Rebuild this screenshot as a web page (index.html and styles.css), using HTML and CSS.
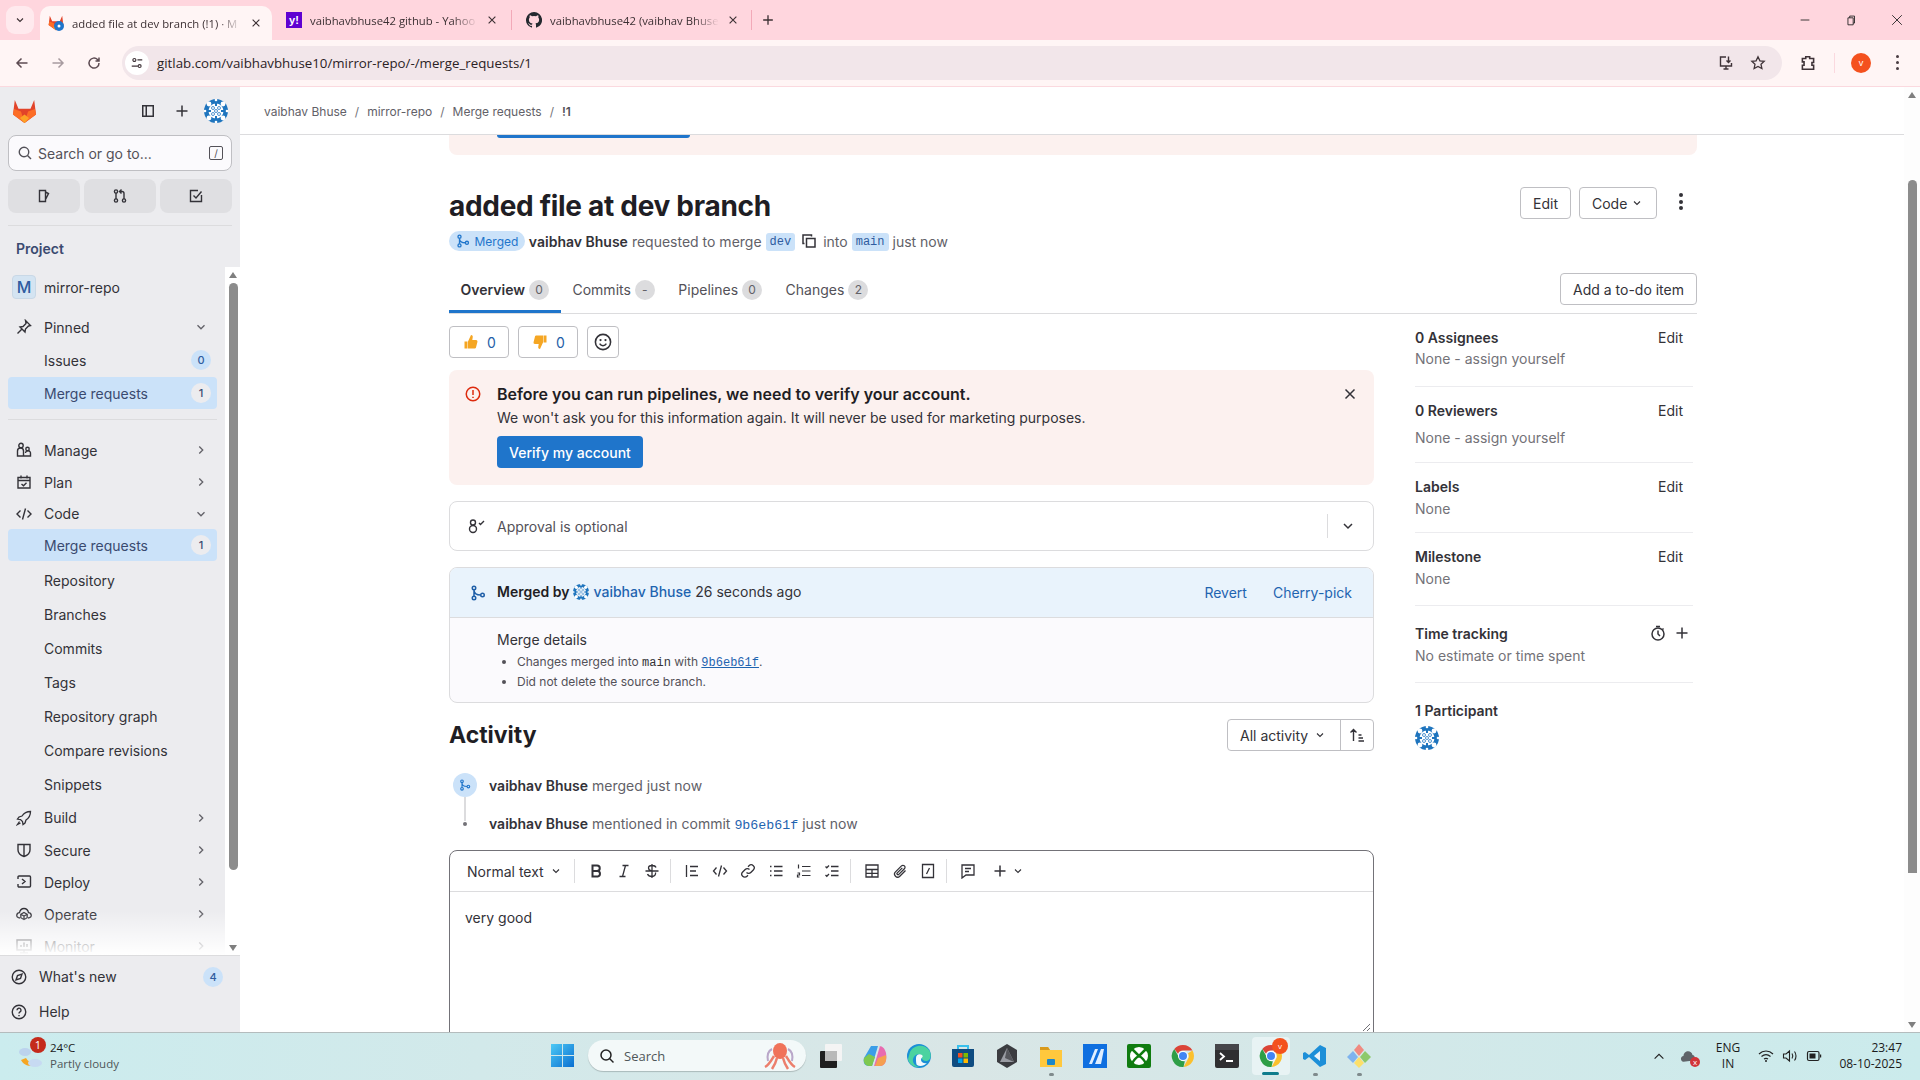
FILE: index.html
```html
<!DOCTYPE html>
<html lang="en">
<head>
    <meta charset="UTF-8">
    <title>added file at dev branch (!1) · Merge requests</title>
    <link rel="stylesheet" href="styles.css">
</head>
<body>
    <svg class="sprite" xmlns="http://www.w3.org/2000/svg">
        <symbol id="down" viewBox="0 0 16 16"><path d="M4 6l4 4 4-4" fill="none" stroke="currentColor" stroke-width="1.5"/></symbol>
        <symbol id="right" viewBox="0 0 16 16"><path d="M6 4l4 4-4 4" fill="none" stroke="currentColor" stroke-width="1.5"/></symbol>
        <symbol id="close" viewBox="0 0 16 16"><path d="M3.5 3.5l9 9M12.500 3.500l-9 9" fill="none" stroke="currentColor" stroke-width="1.5"/></symbol>
        <symbol id="plus" viewBox="0 0 16 16"><path d="M8 2.500v11M2.500 8h11" fill="none" stroke="currentColor" stroke-width="1.5"/></symbol>
        <symbol id="merge" viewBox="0 0 16 16"><g fill="none" stroke="currentColor" stroke-width="1.5"><circle cx="4" cy="3" r="1.750"/><circle cx="4" cy="13" r="1.750"/><circle cx="12.500" cy="10" r="1.750"/><path d="M4 4.750v6.500M4 5c0 3 2.500 5 6.750 5"/></g></symbol>
        <symbol id="avatar" viewBox="0 0 24 24">
            <circle cx="12" cy="12" r="12" fill="#1f75be"/>
            <g fill="#fff">
                <circle cx="12" cy="12" r="7.500"/>
                <circle cx="5" cy="5" r="2.400"/><circle cx="19" cy="5" r="2.400"/><circle cx="5" cy="19" r="2.400"/><circle cx="19" cy="19" r="2.400"/>
                <circle cx="12" cy="1" r="1.300"/><circle cx="12" cy="23" r="1.300"/><circle cx="1" cy="12" r="1.300"/><circle cx="23" cy="12" r="1.300"/>
            </g>
            <g fill="none" stroke="#3f8acb" stroke-width=".900">
                <circle cx="9" cy="9" r="1.500"/><circle cx="15" cy="9" r="1.500"/><circle cx="12" cy="12" r="1.500"/>
                <circle cx="9" cy="15" r="1.500"/><circle cx="15" cy="15" r="1.500"/>
            </g>
            <g fill="#1f75be">
                <rect x="11" y="4" width="2" height="3"/><rect x="11" y="17" width="2" height="3"/><rect x="4" y="11" width="3" height="2"/><rect x="17" y="11" width="3" height="2"/>
            </g>
        </symbol>
        <symbol id="fox" viewBox="0 0 25 25">
            <path d="M12.500 24L1 15.500 2.800 1l3.700 8.800h12L22.200 1 24 15.500z" fill="#e24329"/>
            <path d="M12.500 24L24 15.500l-1-5.500-7 2.500z" fill="#fc6d26"/>
            <path d="M12.500 24L1 15.500l1-5.500 7 2.500z" fill="#fc6d26"/>
            <path d="M12.500 24L8 19l4.500-3.500L17 19z" fill="#fca326"/>
        </symbol>
        <symbol id="chrome" viewBox="0 0 24 24">
            <path d="M12 1a11 11 0 0 1 9.500 5.500H12a5.500 5.500 0 0 0-5 3.200L3.300 5A11 11 0 0 1 12 1z" fill="#db4437"/>
            <path d="M21.500 6.500A11 11 0 0 1 12.500 23l4.300-7.700a5.500 5.500 0 0 0 .2-6z" fill="#fbc02d"/>
            <path d="M12.500 23A11 11 0 0 1 3.300 5l4.500 8a5.500 5.500 0 0 0 6 4.300z" fill="#2e9e46"/>
            <circle cx="12" cy="12" r="5" fill="#fff"/><circle cx="12" cy="12" r="4" fill="#4285f4"/>
        </symbol>
    </svg>

    <!-- browser tabs -->
    <div class="tabstrip">
        <div class="tab-menu"><svg class="ic12"><use href="#down"/></svg></div>
        <div class="tab tab-active">
            <svg class="favicon" viewBox="0 0 16 16"><use href="#fox"/><circle cx="11" cy="11" r="5" fill="#1f75cb"/><circle cx="11" cy="11" r="1.500" fill="#fff"/></svg>
            <span class="tab-title">added file at dev branch (!1) · M</span>
            <svg class="tab-x"><use href="#close"/></svg>
        </div>
        <div class="tab">
            <div class="favicon yahoo">y!</div>
            <span class="tab-title">vaibhavbhuse42 github - Yahoo</span>
            <svg class="tab-x"><use href="#close"/></svg>
        </div>
        <div class="tab-sep"></div>
        <div class="tab">
            <svg class="favicon" viewBox="0 0 16 16"><path fill="#24292f" d="M8 0a8 8 0 0 0-2.530 15.590c.4.070.55-.170.55-.380v-1.340c-2.230.480-2.700-1.070-2.700-1.070-.360-.930-.890-1.170-.890-1.170-.730-.500.050-.490.050-.490.800.060 1.230.830 1.230.830.710 1.220 1.870.870 2.330.660.070-.520.280-.870.510-1.070-1.780-.200-3.640-.890-3.640-3.950 0-.870.310-1.590.820-2.150-.080-.200-.360-1.020.080-2.120 0 0 .670-.210 2.200.820a7.600 7.600 0 0 1 4 0c1.530-1.040 2.200-.820 2.200-.820.440 1.100.160 1.920.080 2.120.510.560.820 1.270.820 2.150 0 3.070-1.870 3.750-3.650 3.950.290.250.540.730.540 1.480v2.190c0 .210.150.460.550.380A8 8 0 0 0 8 0z"/></svg>
            <span class="tab-title">vaibhavbhuse42 (vaibhav Bhuse</span>
            <svg class="tab-x"><use href="#close"/></svg>
        </div>
        <div class="tab-sep"></div>
        <svg class="tab-plus"><use href="#plus"/></svg>
        <div class="win-btns">
            <svg viewBox="0 0 16 16"><path d="M3 8h10" stroke="#222" fill="none"/></svg>
            <svg viewBox="0 0 16 16"><path d="M4.500 5.500h6v8h-6zM6.500 5.500v-2h5.500v8h-1.500" stroke="#222" fill="none"/></svg>
            <svg viewBox="0 0 16 16"><path d="M2.500 2.500l11 11M13.500 2.500l-11 11" stroke="#222" fill="none"/></svg>
        </div>
    </div>

    <!-- address bar -->
    <div class="toolbar">
        <svg class="tool-ic" viewBox="0 0 16 16"><path d="M13.500 8H3M7.500 3.500L3 8l4.500 4.500" fill="none" stroke="#5d4b52" stroke-width="1.500"/></svg>
        <svg class="tool-ic" viewBox="0 0 16 16"><path d="M2.500 8H13M8.500 3.500L13 8l-4.500 4.500" fill="none" stroke="#a89ba0" stroke-width="1.500"/></svg>
        <svg class="tool-ic" viewBox="0 0 16 16"><path d="M13 8a5 5 0 1 1-1.500-3.500L13 6M13 2.500V6H9.500" fill="none" stroke="#5d4b52" stroke-width="1.500"/></svg>
        <div class="omnibox">
            <div class="site-ic">
                <svg viewBox="0 0 16 16"><g fill="none" stroke="#3f3338" stroke-width="1.300"><circle cx="5" cy="4.500" r="1.700"/><circle cx="11" cy="11.500" r="1.700"/><path d="M8.500 4.500H14M2 11.500h7"/></g></svg>
            </div>
            <span class="url">gitlab.com/vaibhavbhuse10/mirror-repo/-/merge_requests/1</span>
            <svg class="omni-ic" viewBox="0 0 16 16"><path d="M8 2H2.500v9h11V8M5.500 14h5M8 11v3M10.500 1.500v6M8.500 5.500l2 2 2-2" fill="none" stroke="#3f3338" stroke-width="1.400"/></svg>
            <svg class="omni-ic" viewBox="0 0 16 16"><path d="M8 1.800l1.900 4 4.300.5-3.200 3 .9 4.300L8 11.500l-3.900 2.100.9-4.300-3.200-3 4.300-.5z" fill="none" stroke="#3f3338" stroke-width="1.300"/></svg>
        </div>
        <svg class="ext-ic" viewBox="0 0 16 16"><path d="M3 4h3V2.500h3.500V4H13v3.500h-1.500V10H13v3.500H3V10h1.500V7H3z" fill="none" stroke="#3f3338" stroke-width="1.400"/></svg>
        <div class="tool-sep"></div>
        <div class="profile">v</div>
        <div class="dots"><i></i><i></i><i></i></div>
    </div>

    <div class="app">
        <!-- gitlab left sidebar -->
        <aside class="sidebar">
            <div class="side-top">
                <svg class="logo"><use href="#fox"/></svg>
                <svg class="top-ic" viewBox="0 0 16 16"><path d="M2.750 2.750h10.500v10.500H2.750zM6.250 2.750v10.500" fill="none" stroke="currentColor" stroke-width="1.500"/></svg>
                <svg class="top-ic plus-ic"><use href="#plus"/></svg>
                <svg class="top-avatar"><use href="#avatar"/></svg>
            </div>
            <div class="search">
                <svg class="search-ic" viewBox="0 0 16 16"><circle cx="7" cy="7" r="4.750" fill="none" stroke="currentColor" stroke-width="1.400"/><path d="M10.500 10.500L14 14" stroke="currentColor" stroke-width="1.400"/></svg>
                <span>Search or go to...</span>
                <span class="kbd">/</span>
            </div>
            <div class="quick">
                <div class="quick-btn"><svg viewBox="0 0 16 16"><path d="M3.500 2.500h6v11h-6zM9.500 4l3 1.500-3 6" fill="none" stroke="currentColor" stroke-width="1.400"/></svg></div>
                <div class="quick-btn"><svg viewBox="0 0 16 16"><g fill="none" stroke="currentColor" stroke-width="1.400"><circle cx="4" cy="3.500" r="1.600"/><circle cx="4" cy="12.500" r="1.600"/><circle cx="12" cy="12.500" r="1.600"/><path d="M4 5v6M12 11V5.500a2 2 0 0 0-2-2H8M9.500 1.500l-2 2 2 2"/></g></svg></div>
                <div class="quick-btn"><svg viewBox="0 0 16 16"><path d="M13.500 7v6.500h-11v-11H10M5.500 7.500l2.500 2.500 5.500-6.500" fill="none" stroke="currentColor" stroke-width="1.400"/></svg></div>
            </div>
            <div class="side-rule"></div>
            <div class="side-project">Project</div>

            <div class="side-scroll">
                <nav class="nav">
                    <div class="nav-project"><span class="proj-badge">M</span>mirror-repo</div>
                    <div class="nav-row">
                        <svg class="nav-ic" viewBox="0 0 16 16"><path d="M9.500 1.500l5 5-2 .5-3 3-.5 3-5-5 3-.5 3-3zM5.500 10.500L1.500 14.500" fill="none" stroke="currentColor" stroke-width="1.400"/></svg>
                        <span>Pinned</span><svg class="nav-chev"><use href="#down"/></svg>
                    </div>
                    <div class="nav-sub nav-issues"><span>Issues</span><b class="count count-blue">0</b></div>
                    <div class="nav-sub nav-active"><span>Merge requests</span><b class="count">1</b></div>
                    <div class="nav-rule"></div>
                    <div class="nav-row">
                        <svg class="nav-ic" viewBox="0 0 16 16"><g fill="none" stroke="currentColor" stroke-width="1.400"><circle cx="5" cy="3.500" r="2.200"/><circle cx="11.500" cy="7" r="1.700"/><path d="M1.500 14V9a3 3 0 0 1 6 0v5zM7.500 14h7v-2.500a2.500 2.500 0 0 0-5-.5"/></g></svg>
                        <span>Manage</span><svg class="nav-chev"><use href="#right"/></svg>
                    </div>
                    <div class="nav-row">
                        <svg class="nav-ic" viewBox="0 0 16 16"><path d="M2 3.500h12v10.500H2zM2 6.500h12M5 1.500v3M11 1.500v3M5.500 10l2 1.800 3-3" fill="none" stroke="currentColor" stroke-width="1.400"/></svg>
                        <span>Plan</span><svg class="nav-chev"><use href="#right"/></svg>
                    </div>
                    <div class="nav-row nav-code">
                        <svg class="nav-ic" viewBox="0 0 16 16"><path d="M4.500 4.500L1 8l3.500 3.500M11.500 4.500L15 8l-3.500 3.500M9.500 2.500l-3 11" fill="none" stroke="currentColor" stroke-width="1.400"/></svg>
                        <span>Code</span><svg class="nav-chev"><use href="#down"/></svg>
                    </div>
                    <div class="nav-sub nav-active"><span>Merge requests</span><b class="count">1</b></div>
                    <div class="nav-sub nav-tall"><span>Repository</span></div>
                    <div class="nav-sub nav-tall"><span>Branches</span></div>
                    <div class="nav-sub nav-tall"><span>Commits</span></div>
                    <div class="nav-sub nav-tall"><span>Tags</span></div>
                    <div class="nav-sub nav-tall"><span>Repository graph</span></div>
                    <div class="nav-sub nav-tall"><span>Compare revisions</span></div>
                    <div class="nav-sub nav-tall"><span>Snippets</span></div>
                    <div class="nav-row nav-build">
                        <svg class="nav-ic" viewBox="0 0 16 16"><path d="M14.500 1.500c-4 0-6.500 1.500-8.500 4.500l-3 1-1.500 2 3 .5 2 2 .5 3 2-1.500 1-3c3-2 4.500-4.500 4.500-8.500zM3.500 11.500l-2 3 3-1.500" fill="none" stroke="currentColor" stroke-width="1.300"/></svg>
                        <span>Build</span><svg class="nav-chev"><use href="#right"/></svg>
                    </div>
                    <div class="nav-row">
                        <svg class="nav-ic" viewBox="0 0 16 16"><path d="M2 2.500h12V8c0 3-3 5.500-6 6.500C5 13.500 2 11 2 8zM8 2.500v12" fill="none" stroke="currentColor" stroke-width="1.400"/></svg>
                        <span>Secure</span><svg class="nav-chev"><use href="#right"/></svg>
                    </div>
                    <div class="nav-row">
                        <svg class="nav-ic" viewBox="0 0 16 16"><path d="M2 5V3a1 1 0 0 1 1-1h10.500a1 1 0 0 1 1 1v9a1 1 0 0 1-1 1H3a1 1 0 0 1-1-1v-2M6 5l3 2.500L6 10M1 7.500h0" fill="none" stroke="currentColor" stroke-width="1.400"/></svg>
                        <span>Deploy</span><svg class="nav-chev"><use href="#right"/></svg>
                    </div>
                    <div class="nav-row">
                        <svg class="nav-ic" viewBox="0 0 16 16"><path d="M4 12C1.500 12 .5 10.500.8 9c.3-1.500 1.700-2.300 2.700-2.300C4 4 6 2.500 8 2.500s4 1.500 4.500 4.200c1 0 2.400.8 2.700 2.300.3 1.500-.7 3-3.200 3M8 6.500l3.200 1.800v3.400L8 13.500l-3.200-1.800V8.300zM4.800 8.300L8 10l3.200-1.700M8 10v3.500" fill="none" stroke="currentColor" stroke-width="1.300"/></svg>
                        <span>Operate</span><svg class="nav-chev"><use href="#right"/></svg>
                    </div>
                    <div class="nav-row">
                        <svg class="nav-ic" viewBox="0 0 16 16"><path d="M1 2h14v10H1zM4 15h8M8 12v3M5 9V7M8 9V4.500M11 9V6" fill="none" stroke="currentColor" stroke-width="1.400"/></svg>
                        <span>Monitor</span><svg class="nav-chev"><use href="#right"/></svg>
                    </div>
                    <div class="nav-fade"></div>
                </nav>
                <div class="side-bar">
                    <i class="arrow-up"></i>
                    <div class="side-thumb"></div>
                    <i class="arrow-down"></i>
                </div>
            </div>

            <div class="side-foot">
                <div class="foot-row">
                    <svg class="foot-ic" viewBox="0 0 16 16"><circle cx="8" cy="8" r="6.750" fill="none" stroke="currentColor" stroke-width="1.400"/><path d="M11 5L9.500 9.500 5 11l1.500-4.500z" fill="none" stroke="currentColor" stroke-width="1.400"/></svg>
                    <span>What's new</span><b class="count count-blue">4</b>
                </div>
                <div class="foot-row">
                    <svg class="foot-ic" viewBox="0 0 16 16"><circle cx="8" cy="8" r="6.750" fill="none" stroke="currentColor" stroke-width="1.400"/><path d="M6 6.200a2 2 0 1 1 3 1.700c-.7.400-1 .8-1 1.600M8 11v1.200" fill="none" stroke="currentColor" stroke-width="1.400"/></svg>
                    <span>Help</span>
                </div>
            </div>
        </aside>

        <main class="main">
            <div class="crumbs">
                <a>vaibhav Bhuse</a><i>/</i><a>mirror-repo</a><i>/</i><a>Merge requests</a><i>/</i><a class="crumb-id">!1</a>
            </div>

            <div class="page">
                <div class="stuck-alert"><div class="stuck-btn"></div></div>

                <div class="title-row">
                    <h1>added file at dev branch</h1>
                    <button class="btn btn-edit">Edit</button>
                    <button class="btn btn-code">Code<svg class="ic12"><use href="#down"/></svg></button>
                    <div class="kebab"><i></i><i></i><i></i></div>
                </div>

                <div class="meta">
                    <span class="state"><svg class="ic14"><use href="#merge"/></svg>Merged</span>
                    <b>vaibhav Bhuse</b>
                    <span>requested to merge</span>
                    <code class="ref">dev</code>
                    <svg class="copy-ic" viewBox="0 0 16 16"><path d="M5.500 5.500h8.500V14H5.500zM3.500 10.500H2V2h8.500v1.500" fill="none" stroke="#333238" stroke-width="1.500"/></svg>
                    <span>into</span>
                    <code class="ref">main</code>
                    <span>just now</span>
                </div>

                <div class="tabs">
                    <div class="mr-tab mr-tab-on">Overview<span class="tab-count">0</span></div>
                    <div class="mr-tab">Commits<span class="tab-count">-</span></div>
                    <div class="mr-tab">Pipelines<span class="tab-count">0</span></div>
                    <div class="mr-tab">Changes<span class="tab-count">2</span></div>
                    <button class="btn btn-todo">Add a to-do item</button>
                </div>

                <div class="columns">
                    <section class="mr-main">
                        <div class="awards">
                            <button class="btn btn-award">
                                <svg class="emoji" viewBox="0 0 16 16"><path d="M1.500 7.500h3v7h-3zM5 7.500l3-6.500c1.500 0 2 1 1.700 2.500L9.300 6H13c1.200 0 1.700 1 1.400 2L13 13.500c-.2.700-.8 1-1.500 1H5z" fill="#f5a623"/></svg>0
                            </button>
                            <button class="btn btn-award">
                                <svg class="emoji" viewBox="0 0 16 16"><path d="M11.500 1.500h3v7h-3zM11 8.500L8 15c-1.500 0-2-1-1.700-2.500L6.700 10H3c-1.200 0-1.700-1-1.400-2L3 2.500c.2-.7.800-1 1.500-1H11z" fill="#f5a623"/></svg>0
                            </button>
                            <button class="btn btn-smile">
                                <svg viewBox="0 0 16 16"><circle cx="8" cy="8" r="6.750" fill="none" stroke="#333238" stroke-width="1.400"/><path d="M5 9.500c.8 1.300 1.800 1.800 3 1.800s2.200-.5 3-1.800" fill="none" stroke="#333238" stroke-width="1.300"/><circle cx="5.800" cy="6.300" r="1" fill="#333238"/><circle cx="10.200" cy="6.300" r="1" fill="#333238"/></svg>
                            </button>
                        </div>

                        <div class="alert">
                            <svg class="alert-ic" viewBox="0 0 16 16"><circle cx="8" cy="8" r="6.750" fill="none" stroke="#dd2b0e" stroke-width="1.500"/><path d="M8 4v5M8 10.700v1.300" stroke="#dd2b0e" stroke-width="1.500"/></svg>
                            <div class="alert-body">
                                <h4>Before you can run pipelines, we need to verify your account.</h4>
                                <p>We won't ask you for this information again. It will never be used for marketing purposes.</p>
                                <button class="btn-primary">Verify my account</button>
                            </div>
                            <svg class="alert-x"><use href="#close"/></svg>
                        </div>

                        <div class="approval">
                            <svg class="approval-ic" viewBox="0 0 18 16"><g fill="none" stroke="#333238" stroke-width="1.400"><circle cx="5" cy="4.500" r="2.500"/><circle cx="5" cy="11" r="3.500"/><path d="M11 5l1.500 1.500L16 3"/></g></svg>
                            <span>Approval is optional</span>
                            <div class="approval-toggle"><svg class="ic16"><use href="#down"/></svg></div>
                        </div>

                        <div class="merged">
                            <div class="merged-head">
                                <svg class="merged-ic"><use href="#merge"/></svg>
                                <span class="merged-by"><b>Merged by</b><svg class="mini-avatar"><use href="#avatar"/></svg><a class="link-b">vaibhav Bhuse</a><span>26 seconds ago</span></span>
                                <a class="link">Revert</a>
                                <a class="link">Cherry-pick</a>
                            </div>
                            <div class="merged-body">
                                <div class="merged-title">Merge details</div>
                                <ul>
                                    <li>Changes merged into <code>main</code> with <code class="sha">9b6eb61f</code>.</li>
                                    <li>Did not delete the source branch.</li>
                                </ul>
                            </div>
                        </div>

                        <div class="activity-head">
                            <h2>Activity</h2>
                            <div class="filter">
                                <div class="filter-main">All activity<svg class="ic12"><use href="#down"/></svg></div>
                                <div class="filter-sort"><svg viewBox="0 0 16 16"><path d="M4.500 14V2.500M1.500 5.500l3-3 3 3M9.500 8h3M9.500 11h4.500M9.500 14h5.500" fill="none" stroke="#333238" stroke-width="1.400"/></svg></div>
                            </div>
                        </div>

                        <div class="note note-first">
                            <div class="note-badge"><svg class="ic12"><use href="#merge"/></svg></div>
                            <div class="note-text"><b>vaibhav Bhuse</b> merged just now</div>
                        </div>
                        <div class="note note-second">
                            <div class="note-dot"></div>
                            <div class="note-text"><b>vaibhav Bhuse</b> mentioned in commit <code class="sha-plain">9b6eb61f</code> just now</div>
                        </div>

                        <div class="editor">
                            <div class="ed-tools">
                                <div class="ed-type">Normal text<svg class="ic12"><use href="#down"/></svg></div>
                                <i class="ed-sep"></i>
                                <span class="ed-btn"><svg viewBox="0 0 16 16"><path d="M4.500 2.500h4.500a2.700 2.700 0 0 1 0 5.500H4.500zM4.500 8h5.200a2.800 2.800 0 0 1 0 5.500H4.500z" fill="none" stroke="currentColor" stroke-width="2"/></svg></span>
                                <span class="ed-btn"><svg viewBox="0 0 16 16"><path d="M6.500 2.500h6M3.500 13.500h6M9.500 2.500l-3 11" fill="none" stroke="currentColor" stroke-width="1.300"/></svg></span>
                                <span class="ed-btn"><svg viewBox="0 0 16 16"><path d="M12 4.500C11.500 3 10 2.500 8 2.500S4.500 3.500 4.500 5 6 7.500 8 8M1.500 8h13M11.500 9.500c.5 2-1 4-3.500 4s-4-1-4.500-2.500M8 1v14" fill="none" stroke="currentColor" stroke-width="1.300"/></svg></span>
                                <i class="ed-sep"></i>
                                <span class="ed-btn"><svg viewBox="0 0 16 16"><path d="M2.500 2v12M6 3.500h8M6 8h6M6 12.500h8" fill="none" stroke="currentColor" stroke-width="1.300"/></svg></span>
                                <span class="ed-btn"><svg viewBox="0 0 16 16"><path d="M4.500 4.500L1.500 8l3 3.500M11.500 4.500l3 3.500-3 3.500M9.500 2.500l-3 11" fill="none" stroke="currentColor" stroke-width="1.300"/></svg></span>
                                <span class="ed-btn"><svg viewBox="0 0 16 16"><path d="M6.500 9.500a3 3 0 0 0 4.300 0l2.500-2.500a3 3 0 0 0-4.300-4.300L8 3.700M9.500 6.500a3 3 0 0 0-4.300 0L2.700 9a3 3 0 0 0 4.300 4.300l1-1" fill="none" stroke="currentColor" stroke-width="1.300"/></svg></span>
                                <span class="ed-btn"><svg viewBox="0 0 16 16"><path d="M6 3.500h8.500M6 8h8.500M6 12.500h8.500M2 3.500h1.500M2 8h1.500M2 12.500h1.500" fill="none" stroke="currentColor" stroke-width="1.300"/></svg></span>
                                <span class="ed-btn"><svg viewBox="0 0 16 16"><path d="M6 3.500h8.500M6 8h8.500M6 12.500h8.500M2.500 1.500v4M1.500 10h2v2h-2v2h2" fill="none" stroke="currentColor" stroke-width="1.200"/></svg></span>
                                <span class="ed-btn"><svg viewBox="0 0 16 16"><path d="M7 3.500h7.500M7 8h7.500M7 12.500h7.500M1.500 3.500l1.300 1.300L5 2.500M1.500 12l1.300 1.300L5 11" fill="none" stroke="currentColor" stroke-width="1.300"/></svg></span>
                                <i class="ed-sep"></i>
                                <span class="ed-btn"><svg viewBox="0 0 16 16"><path d="M2 2h12v12H2zM2 6.500h12M2 10.300h12M8 6.500V14" fill="none" stroke="currentColor" stroke-width="1.300"/></svg></span>
                                <span class="ed-btn"><svg viewBox="0 0 16 16"><path d="M13.500 7.500l-5.700 5.700a3 3 0 0 1-4.300-4.300l6-6a2 2 0 0 1 2.900 2.900l-5.600 5.600a1 1 0 0 1-1.500-1.500l5-5" fill="none" stroke="currentColor" stroke-width="1.300"/></svg></span>
                                <span class="ed-btn"><svg viewBox="0 0 16 16"><path d="M2.500 1.500h11v13h-11zM9.500 5l-3 6" fill="none" stroke="currentColor" stroke-width="1.300"/></svg></span>
                                <i class="ed-sep"></i>
                                <span class="ed-btn"><svg viewBox="0 0 16 16"><path d="M2 2h12v10H6l-4 3zM5 5.500h6M5 8.500h4" fill="none" stroke="currentColor" stroke-width="1.300"/></svg></span>
                                <span class="ed-more"><svg class="ic16"><use href="#plus"/></svg><svg class="ic12"><use href="#down"/></svg></span>
                            </div>
                            <div class="ed-text">very good</div>
                            <svg class="ed-grip" viewBox="0 0 10 10"><path d="M9 2L2 9M9 6L6 9" stroke="#737278" fill="none"/></svg>
                        </div>
                    </section>

                    <aside class="mr-side">
                        <div class="side-block sb-a">
                            <div class="sb-head"><b>0 Assignees</b><span>Edit</span></div>
                            <div class="sb-val">None - assign yourself</div>
                        </div>
                        <div class="side-block sb-b">
                            <div class="sb-head"><b>0 Reviewers</b><span>Edit</span></div>
                            <div class="sb-val">None - assign yourself</div>
                        </div>
                        <div class="side-block sb-c">
                            <div class="sb-head"><b>Labels</b><span>Edit</span></div>
                            <div class="sb-val">None</div>
                        </div>
                        <div class="side-block sb-d">
                            <div class="sb-head"><b>Milestone</b><span>Edit</span></div>
                            <div class="sb-val">None</div>
                        </div>
                        <div class="side-block sb-e">
                            <div class="sb-head"><b>Time tracking</b>
                                <span class="time-ic">
                                    <svg class="ic16" viewBox="0 0 16 16"><circle cx="8" cy="9" r="6" fill="none" stroke="currentColor" stroke-width="1.500"/><path d="M6 1.500h4M8 5.500V9l2 2M12.500 3.500l1 1" fill="none" stroke="currentColor" stroke-width="1.500"/></svg>
                                    <svg class="ic16"><use href="#plus"/></svg>
                                </span>
                            </div>
                            <div class="sb-val">No estimate or time spent</div>
                        </div>
                        <div class="side-block sb-f">
                            <div class="sb-head"><b>1 Participant</b></div>
                            <svg class="part-avatar"><use href="#avatar"/></svg>
                        </div>
                    </aside>
                </div>
            </div>
        </main>

        <div class="page-bar">
            <i class="arrow-up"></i>
            <div class="page-thumb"></div>
            <i class="arrow-down"></i>
        </div>
    </div>

    <!-- windows taskbar -->
    <footer class="taskbar">
        <div class="weather">
            <svg class="weather-ic" viewBox="0 0 26 28"><path d="M3 18c3 6 11 8 16 3-5 0-9-1-11-5z" fill="#f5a623"/><ellipse cx="7" cy="10" rx="6" ry="4" fill="#bcd3ee"/><ellipse cx="17" cy="21" rx="7" ry="4" fill="#c7daf2"/></svg>
            <span class="weather-count">1</span>
            <div class="weather-text"><div>24°C</div><div class="dim">Partly cloudy</div></div>
        </div>

        <div class="tb-center">
            <svg class="win-logo" viewBox="0 0 24 24"><defs><linearGradient id="wg" x1="0" y1="0" x2="1" y2="1"><stop offset="0" stop-color="#4cc9f5"/><stop offset="1" stop-color="#0a6fd1"/></linearGradient></defs><path d="M0 0h11.500v11.500H0zM12.500 0H24v11.500H12.500zM0 12.500h11.500V24H0zM12.500 12.500H24V24H12.500z" fill="url(#wg)"/></svg>
            <div class="tb-search">
                <svg viewBox="0 0 16 16"><circle cx="7" cy="7" r="5" fill="none" stroke="#222" stroke-width="1.500"/><path d="M10.500 10.500L14.500 14.500" stroke="#222" stroke-width="1.500"/></svg>
                <span>Search</span>
                <svg class="octo" viewBox="0 0 34 30"><ellipse cx="17" cy="10" rx="7" ry="8" fill="#f0735a"/><path d="M11 15C8 20 6 24 2 26M14 17c-1 4-3 8-5 11M20 17c1 4 3 8 5 11M23 15c3 5 5 9 9 11" fill="none" stroke="#ec7f6c" stroke-width="2.500"/><path d="M9 8C5 10 4 15 5 20M25 8c4 2 5 7 4 12" fill="none" stroke="#b9a7c9" stroke-width="2"/></svg>
            </div>
            <div class="tb-apps">
                <span class="app-slot"><svg viewBox="0 0 24 24"><rect x="6" y="0" width="17" height="17" rx="1" fill="#f4f4f4"/><rect x="1" y="7" width="17" height="17" rx="1" fill="#1f1f1f"/><rect x="6" y="7" width="12" height="10" fill="#b9b9b9"/></svg></span>
                <span class="app-slot"><svg viewBox="0 0 24 24"><path d="M8 2h7l-6 20H6C1 22 0 18 1 14z" fill="#3b9ee8"/><path d="M16 2c4 0 6 3 7 7 1 6 0 13-6 13h-6l6-20z" fill="#e86bb0"/><path d="M6 10l6 3-3 9H6C2 22 0 18 1 14z" fill="#7ec850"/><path d="M15 14l8-3c1 5-1 11-6 11h-5z" fill="#f5a050"/></svg></span>
                <span class="app-slot"><svg viewBox="0 0 24 24"><circle cx="12" cy="12" r="12" fill="#1b8fd6"/><path d="M3 8C6 1 17-1 22 6c3 4 2 11-3 11-3 0-5-2-4-5-2-3-8-2-9 3-1 4 3 8 7 8-6 1-11-3-12-8z" fill="#4bd3a0"/><path d="M9 14c0-3 3-5 6-3 2 2-1 2-1 5 0 2 3 4 6 3-3 3-7 4-10 2-1-1-1-5-1-7z" fill="#fff" opacity=".95"/></svg></span>
                <span class="app-slot"><svg viewBox="0 0 24 24"><path d="M7 6V2h10v4" fill="none" stroke="#39c0ed" stroke-width="2"/><path d="M1 5h22v16a2 2 0 0 1-2 2H3a2 2 0 0 1-2-2z" fill="#0f4c81"/><rect x="7" y="9" width="4.500" height="4.500" fill="#f25022"/><rect x="12.500" y="9" width="4.500" height="4.500" fill="#7fba00"/><rect x="7" y="14.500" width="4.500" height="4.500" fill="#00a4ef"/><rect x="12.500" y="14.500" width="4.500" height="4.500" fill="#ffb900"/></svg></span>
                <span class="app-slot"><svg viewBox="0 0 24 24"><path d="M12 0l10 6v12l-10 6-10-6V6z" fill="#3b3c40"/><path d="M12 4L5 18h14z" fill="#9a9ca3"/><path d="M12 4l7 14-9-4z" fill="#55565b"/></svg></span>
                <span class="app-slot app-on-dot"><svg viewBox="0 0 24 24"><path d="M1 3h8l2 3h12v17H1z" fill="#ffc83d"/><path d="M1 3h8l2 3H1z" fill="#d99a1c"/><rect x="8" y="15" width="8" height="6" rx="1" fill="#1b87c9"/></svg></span>
                <span class="app-slot"><svg viewBox="0 0 24 24"><rect width="24" height="24" fill="#0f6fe0"/><path d="M6 20L12 5h3L9 20zM12 20l6-15h3l-3 15z" fill="#dfeeff"/></svg></span>
                <span class="app-slot"><svg viewBox="0 0 24 24"><rect width="24" height="24" rx="2" fill="#107c10"/><circle cx="12" cy="12" r="9" fill="#fff"/><path d="M5 5l7 7 7-7M5 20c2-5 5-7 7-8 2 1 5 3 7 8" fill="none" stroke="#107c10" stroke-width="2.500"/></svg></span>
                <span class="app-slot"><svg viewBox="0 0 24 24"><use href="#chrome"/></svg></span>
                <span class="app-slot"><svg viewBox="0 0 24 24"><rect width="24" height="24" rx="2" fill="#2f2f31"/><rect width="24" height="6" fill="#46464a"/><path d="M5 9l4 3.500L5 16M11 17h7" fill="none" stroke="#fff" stroke-width="1.800"/></svg></span>
                <span class="app-slot app-current"><svg viewBox="0 0 24 24"><use href="#chrome"/></svg><span class="app-badge">v</span></span>
                <span class="app-slot app-on-dot"><svg viewBox="0 0 24 24"><path d="M17 1l6 3v16l-6 3L6 13l-4 3-2-1V9l2-1 4 3z" fill="#1d8fd8"/><path d="M17 7v10l-6-5z" fill="#e9f4fb"/></svg></span>
                <span class="app-slot app-on-dot"><svg viewBox="0 0 24 24"><path d="M12 0l5 6-5 6-5-6z" fill="#f08a80"/><path d="M6 7l5 6-5 6-6-6z" fill="#7eb3ee"/><path d="M18 7l6 6-6 6-5-6z" fill="#8dc96b"/><path d="M12 13l5 6-5 5-5-5z" fill="#fcdf6a"/></svg></span>
            </div>
        </div>

        <div class="tray">
            <svg class="tray-chev" viewBox="0 0 16 16"><path d="M3 11l5-5 5 5" fill="none" stroke="#222" stroke-width="1.300"/></svg>
            <span class="tray-cloud"><svg viewBox="0 0 16 16"><path d="M4 13C1 13 1 8 4 8c0-5 7-6 8-1 2 0 3 3 1 5" fill="#5f6368"/></svg><i>x</i></span>
            <div class="lang"><div>ENG</div><div>IN</div></div>
            <svg class="tray-ic" viewBox="0 0 16 16"><path d="M1 6c4-4 10-4 14 0M3.500 8.500c3-2.500 6-2.500 9 0M6 11c1.500-1 2.500-1 4 0" fill="none" stroke="#222" stroke-width="1.200"/><circle cx="8" cy="13" r="1" fill="#222"/></svg>
            <svg class="tray-ic" viewBox="0 0 16 16"><path d="M1.500 6v4h2.500l3.500 3V3L4 6zM10 5.500c1 1.500 1 3.500 0 5M12.500 3.500c2 2.500 2 6.500 0 9" fill="none" stroke="#222" stroke-width="1.100"/></svg>
            <svg class="tray-ic" viewBox="0 0 16 16"><rect x="1.500" y="3.500" width="11.500" height="9" rx="1.500" fill="none" stroke="#222" stroke-width="1.200"/><rect x="3.500" y="5.500" width="6" height="5" fill="#222"/><rect x="14" y="6.500" width="1.200" height="3" fill="#222"/></svg>
            <div class="clock"><div>23:47</div><div>08-10-2025</div></div>
        </div>
    </footer>
</body>
</html>
```

FILE: styles.css
```css
* {
    box-sizing: border-box;
}
html, body {
    margin: 0;
    height: 100%;
    overflow: hidden;
}
body {
    display: flex;
    flex-direction: column;
    width: 1920px;
    height: 1080px;
    font-family: Inter, "Noto Sans", sans-serif;
    font-size: 14px;
    color: #333238;
    background: #fff;
}
svg {
    display: block;
    flex: none;
}
button {
    font: inherit;
    color: inherit;
}
.sprite {
    width: 0;
    height: 0;
    position: absolute;
}
.ic12 { width: 12px; height: 12px; }
.ic14 { width: 14px; height: 14px; }
.ic16 { width: 16px; height: 16px; }

/* browser tabs */
.tabstrip {
    height: 40px;
    flex: none;
    display: flex;
    align-items: flex-end;
    background: #ffd6de;
    font-family: "Open Sans", sans-serif;
    font-size: 11.300px;
    color: #3c3033;
    padding-left: 6px;
}
.tab-menu {
    width: 28px;
    height: 28px;
    margin: 0 6px 6px 0;
    border-radius: 9px;
    background: #ffeaee;
    display: flex;
    align-items: center;
    justify-content: center;
}
.tab {
    width: 239px;
    height: 34px;
    display: flex;
    align-items: center;
    padding: 0 13px 6px 14px;
    flex: none;
}
.tab-active {
    width: 232px;
    padding-left: 8px;
    padding-right: 10px;
    padding-bottom: 0;
    background: #fff5f5;
    border-radius: 10px 10px 0 0;
}
.favicon {
    width: 16px;
    height: 16px;
    margin-right: 8px;
    flex: none;
}
.yahoo {
    background: #5f01d1;
    color: #fff;
    font: bold 11px/16px "Liberation Sans", sans-serif;
    text-align: center;
}
.tab-title {
    flex: 1;
    white-space: nowrap;
    -webkit-mask-image: linear-gradient(to right, #000 85%, transparent);
    mask-image: linear-gradient(to right, #000 85%, transparent);
}
.tab-x {
    width: 12px;
    height: 12px;
    margin-left: 8px;
}
.tab-sep {
    width: 1px;
    height: 20px;
    background: #f2a9b8;
    margin-bottom: 10px;
    flex: none;
}
.tab-plus {
    width: 14px;
    height: 14px;
    margin: 0 0 13px 9px;
}
.win-btns {
    margin-left: auto;
    display: flex;
    height: 40px;
    align-items: center;
    gap: 32px;
    padding-right: 16px;
}
.win-btns svg {
    width: 14px;
    height: 14px;
}

/* address bar */
.toolbar {
    height: 47px;
    flex: none;
    display: flex;
    align-items: center;
    background: #fff5f5;
    border-bottom: 1px solid #fbd9df;
    padding: 0 0 1px 14px;
}
.tool-ic {
    width: 16px;
    height: 16px;
    margin-right: 20px;
}
.omnibox {
    width: 1660px;
    height: 34px;
    border-radius: 17px;
    background: #f2e6ea;
    display: flex;
    align-items: center;
    padding-left: 3px;
}
.site-ic {
    width: 24px;
    height: 24px;
    border-radius: 50%;
    background: #fff;
    display: flex;
    align-items: center;
    justify-content: center;
}
.site-ic svg {
    width: 14px;
    height: 14px;
}
.url {
    margin-left: 8px;
    font-family: "Open Sans", sans-serif;
    font-size: 13.300px;
    color: #2b2225;
    flex: 1;
}
.omni-ic {
    width: 16px;
    height: 16px;
    margin-right: 16px;
}
.ext-ic {
    width: 18px;
    height: 18px;
    margin-left: 17px;
}
.tool-sep {
    width: 1px;
    height: 20px;
    background: #fbd9df;
    margin-left: 17px;
}
.profile {
    width: 20px;
    height: 20px;
    border-radius: 50%;
    margin-left: 16px;
    background: #f4511e;
    color: #fff;
    font-size: 9px;
    line-height: 20px;
    text-align: center;
}
.dots {
    margin-left: 25px;
    display: flex;
    flex-direction: column;
    gap: 3px;
}
.dots i, .kebab i {
    display: block;
    width: 3px;
    height: 3px;
    border-radius: 50%;
    background: #4a3d42;
}

.app {
    flex: 1;
    display: flex;
    min-height: 0;
}

/* gitlab sidebar */
.sidebar {
    width: 240px;
    flex: none;
    background: #ececef;
    display: flex;
    flex-direction: column;
}
.side-top {
    height: 48px;
    flex: none;
    display: flex;
    align-items: center;
    padding: 0 12px;
}
.logo {
    width: 25px;
    height: 25px;
}
.top-ic {
    width: 16px;
    height: 16px;
    margin-left: 103px;
}
.plus-ic {
    margin-left: 18px;
}
.top-avatar {
    width: 24px;
    height: 24px;
    margin-left: 14px;
}
.search {
    height: 36px;
    margin: 0 8px;
    flex: none;
    border: 1px solid #bfbfc3;
    border-radius: 8px;
    background: #fbfafd;
    display: flex;
    align-items: center;
    color: #535158;
    padding: 0 8px;
}
.search-ic {
    width: 16px;
    height: 16px;
    margin-right: 5px;
}
.kbd {
    margin-left: auto;
    width: 14px;
    height: 14px;
    border: 1px solid #535158;
    border-radius: 2px;
    font-size: 10px;
    line-height: 12px;
    text-align: center;
}
.quick {
    display: flex;
    gap: 4px;
    margin: 8px 8px 0;
    flex: none;
}
.quick-btn {
    flex: 1;
    height: 34px;
    border-radius: 8px;
    background: #dfdfe2;
    display: flex;
    align-items: center;
    justify-content: center;
}
.quick-btn svg {
    width: 16px;
    height: 16px;
}
.side-rule {
    height: 1px;
    flex: none;
    margin: 12px 8px 0;
    background: #dcdcde;
}
.side-project {
    height: 41px;
    flex: none;
    padding: 14px 0 0 16px;
    font-weight: 600;
    color: #3a4a70;
}
.side-scroll {
    flex: 1;
    display: flex;
    min-height: 0;
}
.nav {
    flex: 1;
    overflow: hidden;
    position: relative;
    padding: 8px 8px 0;
}
.nav-project {
    height: 24px;
    display: flex;
    align-items: center;
    padding-left: 4px;
    margin-bottom: 12px;
}
.proj-badge {
    width: 24px;
    height: 24px;
    margin-right: 8px;
    border-radius: 4px;
    background: #d4e4f2;
    border: 1px solid #c9d8e6;
    color: #2f5ca0;
    font-size: 16px;
    font-weight: 500;
    line-height: 22px;
    text-align: center;
}
.nav-row {
    height: 32px;
    display: flex;
    align-items: center;
    padding-left: 8px;
}
.nav-ic {
    width: 16px;
    height: 16px;
    margin-right: 12px;
}
.nav-chev {
    width: 14px;
    height: 14px;
    margin-left: auto;
    margin-right: 9px;
    color: #626168;
}
.nav-sub {
    height: 32px;
    display: flex;
    align-items: center;
    padding: 0 6px 0 36px;
}
.nav-issues {
    height: 34px;
}
.nav-active {
    background: #cbe2f9;
    border-radius: 4px;
    color: #3a4a70;
    margin-bottom: 2px;
}
.nav-tall {
    height: 34px;
}
.nav-build {
    height: 33px;
}
.nav-code {
    height: 31px;
}
.count {
    margin-left: auto;
    width: 20px;
    height: 20px;
    border-radius: 50%;
    background: #ececef;
    color: #3a4a70;
    font-size: 11px;
    font-weight: 500;
    line-height: 20px;
    text-align: center;
}
.count-blue {
    background: #cbe2f9;
    color: #2f5ca0;
}
.nav-rule {
    height: 1px;
    margin: 10px 0 14px;
    background: #dcdcde;
}
.nav-fade {
    position: absolute;
    left: 0;
    right: 0;
    bottom: 0;
    height: 44px;
    background: linear-gradient(to bottom, rgba(255,255,255,0), #fff);
}
.side-bar {
    width: 15px;
    flex: none;
    background: #fff;
    display: flex;
    flex-direction: column;
    align-items: center;
    padding: 5px 0 4px 1px;
}
.side-thumb {
    width: 9px;
    height: 587px;
    margin-top: 5px;
    border-radius: 5px;
    background: #8c8c8c;
}
.arrow-up, .arrow-down {
    display: block;
    width: 0;
    height: 0;
    border-left: 4px solid transparent;
    border-right: 4px solid transparent;
    flex: none;
}
.arrow-up {
    border-bottom: 6px solid #7f7f7f;
}
.arrow-down {
    margin-top: auto;
    border-top: 6px solid #7f7f7f;
}
.side-foot {
    height: 77px;
    flex: none;
    border-top: 1px solid #dcdcde;
    padding-top: 3px;
}
.foot-row {
    height: 35px;
    display: flex;
    align-items: center;
    padding: 0 17px 0 11px;
}
.foot-ic {
    width: 16px;
    height: 16px;
    margin-right: 12px;
}

/* main column */
.main {
    flex: 1;
    min-width: 0;
    display: flex;
    flex-direction: column;
    overflow: hidden;
}
.crumbs {
    height: 48px;
    flex: none;
    border-bottom: 1px solid #dcdcde;
    display: flex;
    align-items: center;
    padding: 1px 0 0 24px;
    font-size: 12px;
    color: #626168;
}
.crumbs i {
    font-style: normal;
    margin: 0 8px;
    color: #737278;
}
.crumb-id {
    font-weight: 600;
    color: #535158;
}
.page {
    width: 1248px;
    margin-left: 209px;
}
.stuck-alert {
    height: 20px;
    padding-left: 48px;
    border-radius: 0 0 8px 8px;
    background: #fcf1ef;
}
.stuck-btn {
    width: 193px;
    height: 3px;
    border-radius: 0 0 4px 4px;
    background: #1f75cb;
}
.title-row {
    display: flex;
    align-items: flex-start;
    height: 40px;
    margin-top: 30px;
}
h1 {
    margin: 0;
    padding-top: 1px;
    font-size: 28px;
    line-height: 40px;
    font-weight: 700;
    letter-spacing: -0.300px;
    color: #1f1e24;
    flex: 1;
}
.btn {
    height: 32px;
    padding: 0 12px;
    border: 1px solid #bfbfc3;
    border-radius: 4px;
    background: #fff;
    display: inline-flex;
    align-items: center;
}
.btn-edit {
    width: 51px;
    margin: 2px 8px 0 0;
}
.btn-code {
    width: 78px;
    gap: 4px;
    margin-top: 2px;
}
.kebab {
    display: flex;
    flex-direction: column;
    gap: 2.500px;
    margin: 8px 14px 0 22px;
}
.kebab i {
    width: 4px;
    height: 4px;
    background: #333238;
}
.meta {
    height: 20px;
    margin-top: 6px;
    display: flex;
    align-items: center;
    gap: 4px;
    color: #626168;
    white-space: nowrap;
}
.meta b {
    font-weight: 600;
    color: #333238;
}
.state {
    display: inline-flex;
    align-items: center;
    gap: 5px;
    height: 20px;
    padding: 0 6.500px;
    border-radius: 10px;
    background: #cbe2f9;
    color: #1f75cb;
    font-size: 12px;
}
.ref {
    height: 18px;
    margin-top: 2px;
    padding: 0 4px;
    border-radius: 3px;
    background: #cbe2f9;
    color: #2f5ca0;
    font-family: "Liberation Mono", monospace;
    font-size: 12px;
    line-height: 18px;
}
.copy-ic {
    width: 16px;
    height: 16px;
    margin: 0 2px;
}
.tabs {
    height: 47px;
    margin-top: 16px;
    border-bottom: 1px solid #dcdcde;
    display: flex;
    align-items: flex-end;
}
.mr-tab {
    height: 47px;
    display: flex;
    align-items: center;
    gap: 4px;
    padding: 0 12px 0 11.500px;
    color: #535158;
    white-space: nowrap;
}
.mr-tab-on {
    font-weight: 600;
    color: #333238;
    box-shadow: inset 0 -3px 0 #1f75cb;
}
.tab-count {
    min-width: 20px;
    height: 20px;
    border-radius: 10px;
    background: #dcdcde;
    color: #626168;
    font-size: 12px;
    font-weight: 400;
    line-height: 20px;
    text-align: center;
}
.btn-todo {
    margin: 0 0 8px auto;
    width: 137px;
}
.columns {
    display: flex;
}
.mr-main {
    width: 925px;
    flex: none;
}
.mr-side {
    width: 278px;
    flex: none;
    margin-left: 41px;
}
.awards {
    display: flex;
    gap: 9px;
    margin-top: 12px;
}
.btn-award {
    width: 60px;
    gap: 8px;
    padding: 0 12px 0 13px;
    height: 32px;
    color: #1f5fa8;
}
.btn-smile {
    width: 32px;
    padding: 0 7px;
    justify-content: center;
}
.btn-smile svg {
    width: 18px;
    height: 18px;
}
.emoji {
    width: 16px;
    height: 16px;
}
.alert {
    height: 115px;
    margin-top: 12px;
    border-radius: 8px;
    background: #fcf1ef;
    display: flex;
    padding: 14px 16px 0 16px;
}
.alert-ic {
    width: 16px;
    height: 16px;
    margin: 2px 16px 0 0;
}
.alert-body {
    flex: 1;
}
.alert h4 {
    margin: 0;
    font-size: 16px;
    line-height: 20px;
    font-weight: 600;
    color: #1f1e24;
}
.alert p {
    margin: 4px 0 8px;
    line-height: 20px;
}
.btn-primary {
    width: 146px;
    height: 32px;
    border: 0;
    border-radius: 4px;
    background: #1f75cb;
    color: #fff;
    font-weight: 500;
}
.alert-x {
    width: 16px;
    height: 16px;
    margin: 2px 0 0 0;
}
.approval {
    height: 50px;
    margin-top: 16px;
    border: 1px solid #dcdcde;
    border-radius: 8px;
    display: flex;
    align-items: center;
    padding-left: 18px;
    color: #535158;
}
.approval-ic {
    width: 18px;
    height: 16px;
    margin-right: 11px;
}
.approval-toggle {
    margin-left: auto;
    width: 46px;
    height: 24px;
    border-left: 1px solid #dcdcde;
    display: flex;
    align-items: center;
    justify-content: center;
    padding-right: 6px;
    color: #333238;
}
.merged {
    height: 136px;
    margin-top: 16px;
    border: 1px solid #dcdcde;
    border-radius: 8px;
    overflow: hidden;
    background: #fbfafd;
}
.merged-head {
    height: 50px;
    display: flex;
    align-items: center;
    gap: 26px;
    padding: 0 21px 0 20px;
    border-bottom: 1px solid #dcdcde;
    background: #e9f3fc;
}
.merged-ic {
    width: 16px;
    height: 16px;
    color: #1f5fa8;
    margin-right: -15px;
}
.merged-by {
    flex: 1;
    display: flex;
    align-items: center;
    gap: 4px;
    white-space: nowrap;
    margin-bottom: 2px;
}
.merged-by b {
    font-weight: 600;
    color: #1f1e24;
}
.mini-avatar {
    width: 16px;
    height: 16px;
}
.link, .link-b {
    color: #1f64b0;
}
.link-b {
    font-weight: 500;
}
.merged-body {
    padding: 12px 0 0 47px;
}
.merged-title {
    line-height: 20px;
}
.merged ul {
    margin: 2px 0 0;
    padding-left: 20px;
    font-size: 12px;
    color: #535158;
}
.merged li {
    height: 20px;
    line-height: 20px;
}
.merged code {
    font-family: "Liberation Mono", monospace;
    font-size: 12px;
    color: #333238;
}
.merged .sha {
    color: #1f64b0;
    text-decoration: underline;
}
.activity-head {
    margin-top: 16px;
    height: 32px;
    display: flex;
    align-items: center;
    justify-content: space-between;
}
h2 {
    margin: 0;
    font-size: 23px;
    font-weight: 700;
    color: #1f1e24;
}
.filter {
    display: flex;
    width: 147px;
    height: 32px;
    border: 1px solid #bfbfc3;
    border-radius: 4px;
}
.filter-main {
    flex: 1;
    display: flex;
    align-items: center;
    gap: 6px;
    padding-left: 12px;
    white-space: nowrap;
}
.filter-sort {
    width: 33px;
    border-left: 1px solid #bfbfc3;
    display: flex;
    align-items: center;
    justify-content: center;
}
.filter-sort svg {
    width: 16px;
    height: 16px;
}
.note {
    display: flex;
    align-items: center;
    color: #626168;
}
.note b {
    font-weight: 600;
    color: #333238;
}
.note-first {
    margin-top: 22px;
    height: 24px;
    padding-left: 4px;
}
.note-badge {
    width: 24px;
    height: 24px;
    border-radius: 50%;
    background: #cbe2f9;
    color: #1f75cb;
    display: flex;
    align-items: center;
    justify-content: center;
    margin-right: 12px;
    position: relative;
}
.note-badge::after {
    content: "";
    position: absolute;
    left: 11px;
    top: 24px;
    width: 2px;
    height: 24px;
    background: #dcdcde;
}
.note-second {
    margin-top: 17px;
    height: 20px;
    padding-left: 4px;
}
.note-dot {
    width: 4px;
    height: 4px;
    margin: 0 22px 0 10px;
    border-radius: 50%;
    background: #737278;
}
.sha-plain {
    font-family: "Liberation Mono", monospace;
    font-size: 13.300px;
    color: #1f64b0;
}
.note-text {
    white-space: nowrap;
}
.editor {
    position: relative;
    margin-top: 16px;
    height: 300px;
    border: 1px solid #737278;
    border-radius: 8px 8px 0 0;
}
.ed-tools {
    height: 41px;
    border-bottom: 1px solid #dcdcde;
    display: flex;
    align-items: center;
    padding-left: 17px;
}
.ed-type {
    display: flex;
    align-items: center;
    gap: 6px;
    width: 107px;
    white-space: nowrap;
}
.ed-sep {
    display: block;
    width: 1px;
    height: 24px;
    background: #dcdcde;
    margin-right: 7px;
    flex: none;
}
.ed-btn + .ed-sep {
    margin-left: 4px;
}
.ed-btn {
    width: 28px;
    display: flex;
    justify-content: center;
}
.ed-btn svg {
    width: 16px;
    height: 16px;
}
.ed-more {
    display: flex;
    align-items: center;
    gap: 4px;
    margin-left: 10px;
}
.ed-text {
    padding: 16px 0 0 15px;
    line-height: 20px;
}
.ed-grip {
    position: absolute;
    right: 2px;
    top: 171px;
    width: 10px;
    height: 10px;
}

/* right column of the merge request */
.side-block {
    border-bottom: 1px solid #ececef;
}
.sb-head {
    height: 20px;
    margin: -1px 0 1px;
    display: flex;
    align-items: center;
    justify-content: space-between;
    padding-right: 10px;
}
.sb-head b {
    font-weight: 600;
}
.sb-val {
    line-height: 20px;
    color: #737278;
}
.sb-a { padding: 14px 0 17px; }
.sb-a .sb-val { margin-top: 2px; }
.sb-b { padding: 14px 0 14px; }
.sb-b .sb-val { margin-top: 8px; }
.sb-c { padding: 14px 0 13px; }
.sb-c .sb-val { margin-top: 3px; }
.sb-d { padding: 14px 0 16px; }
.sb-d .sb-val { margin-top: 3px; }
.sb-e { padding: 18px 0 16px; }
.sb-e .sb-val { margin-top: 3px; }
.sb-f { padding: 18px 0 0; border-bottom: 0; }
.time-ic {
    display: flex;
    gap: 8px;
    margin-right: -7px;
}
.part-avatar {
    width: 24px;
    height: 24px;
    margin-top: 6px;
}
.page-bar {
    width: 16px;
    flex: none;
    background: #fdfdfd;
    display: flex;
    flex-direction: column;
    align-items: center;
    padding: 5px 0 4px;
}
.page-thumb {
    width: 9px;
    height: 693px;
    margin-top: 82px;
    background: #8c8c8c;
    border-radius: 5px 5px 0 0;
}

/* windows taskbar */
.taskbar {
    height: 48px;
    flex: none;
    display: flex;
    align-items: center;
    padding-bottom: 2px;
    border-top: 1px solid #b4bcbd;
    background: linear-gradient(to right, #cbecee, #d9e6e6 50%, #cbebec);
    font-family: "Open Sans", sans-serif;
    font-size: 12px;
    color: #1b1b1b;
    position: relative;
}
.weather {
    width: 551px;
    flex: none;
    display: flex;
    align-items: center;
    padding-left: 18px;
    position: relative;
}
.weather-ic {
    width: 26px;
    height: 28px;
    margin-right: 6px;
}
.weather-count {
    position: absolute;
    left: 30px;
    top: -3px;
    width: 16px;
    height: 16px;
    border-radius: 50%;
    background: #c42b1c;
    color: #fff;
    font-size: 11px;
    line-height: 16px;
    text-align: center;
}
.weather-text {
    font-size: 11.500px;
    line-height: 16px;
}
.dim {
    color: #4f5759;
}
.tb-center {
    display: flex;
    align-items: center;
}
.win-logo {
    width: 23px;
    height: 23px;
    margin-right: 14px;
}
.tb-search {
    width: 218px;
    height: 31px;
    border-radius: 16px;
    background: #f3f9f9;
    box-shadow: 0 1px 1px rgba(0,0,0,0.2);
    display: flex;
    align-items: center;
    padding-left: 11px;
    font-size: 13px;
    color: #4f5759;
}
.tb-search > svg:first-child {
    width: 16px;
    height: 16px;
    margin-right: 9px;
}
.octo {
    width: 34px;
    height: 30px;
    margin-left: auto;
    margin-right: 9px;
}
.tb-apps {
    display: flex;
    margin-left: 3px;
}
.app-slot {
    width: 44px;
    height: 40px;
    display: flex;
    align-items: center;
    justify-content: center;
    position: relative;
}
.app-slot svg {
    width: 24px;
    height: 24px;
}
.app-on-dot::after {
    content: "";
    position: absolute;
    left: 20px;
    bottom: 0;
    width: 5px;
    height: 3px;
    border-radius: 2px;
    background: #7f8a8c;
}
.app-current::before {
    content: "";
    position: absolute;
    left: 3px;
    top: 1px;
    width: 38px;
    height: 38px;
    border-radius: 4px;
    background: #e8f3f4;
}
.app-current svg {
    position: relative;
}
.app-current::after {
    content: "";
    position: absolute;
    left: 13px;
    bottom: 1px;
    width: 17px;
    height: 3px;
    border-radius: 2px;
    background: #0f7c8c;
}
.app-badge {
    position: absolute;
    left: 23px;
    top: 2px;
    width: 16px;
    height: 16px;
    border-radius: 50%;
    background: #f4511e;
    color: #fff;
    font-size: 8px;
    line-height: 16px;
    text-align: center;
}
.tray {
    margin-left: auto;
    display: flex;
    align-items: center;
    padding-right: 18px;
}
.tray-chev {
    width: 14px;
    height: 14px;
    margin-right: 13px;
}
.tray-cloud {
    position: relative;
    width: 18px;
    height: 18px;
    margin-right: 15px;
}
.tray-cloud svg {
    width: 18px;
    height: 18px;
}
.tray-cloud i {
    position: absolute;
    right: -3px;
    bottom: -2px;
    width: 10px;
    height: 10px;
    border-radius: 50%;
    background: #d13438;
    color: #fff;
    font-size: 8px;
    font-style: normal;
    line-height: 9px;
    text-align: center;
}
.lang {
    width: 32px;
    text-align: center;
    line-height: 16px;
    margin-right: 14px;
}
.tray-ic {
    width: 16px;
    height: 16px;
    margin-right: 8px;
}
.clock {
    margin-left: 8px;
    width: 64px;
    text-align: right;
    line-height: 16px;
}
```
